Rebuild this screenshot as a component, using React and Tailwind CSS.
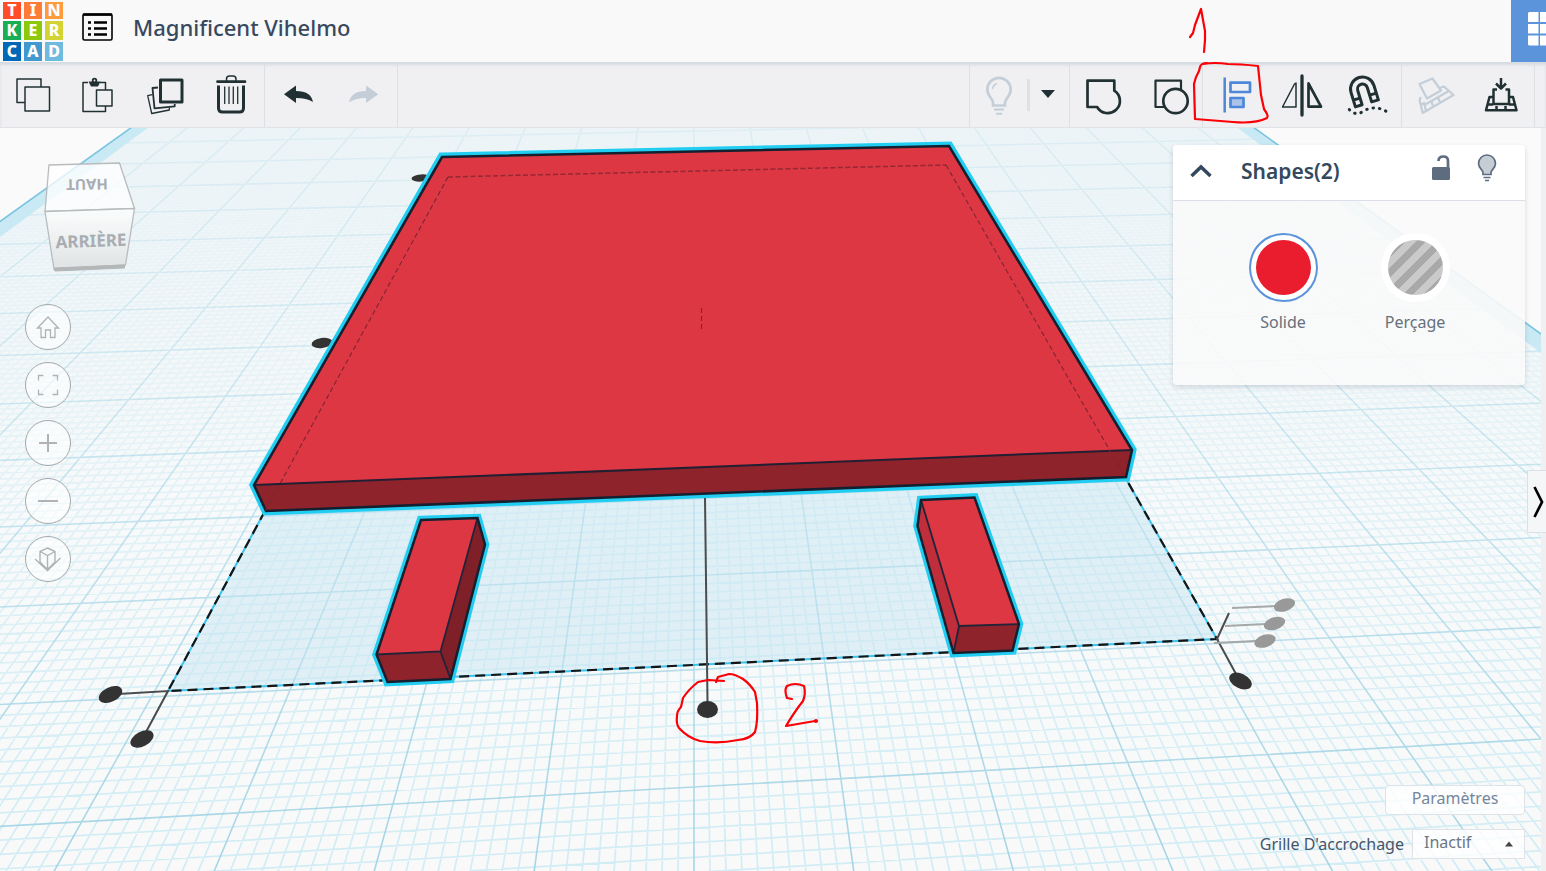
import React, { useState } from 'react';

const logoTiles = [
  { letter: 'T', color: 'bg-[#ff4d2a]' },
  { letter: 'I', color: 'bg-[#ff7b38]' },
  { letter: 'N', color: 'bg-[#ff9c3a]' },
  { letter: 'K', color: 'bg-[#18ae55]' },
  { letter: 'E', color: 'bg-[#8dc90a]' },
  { letter: 'R', color: 'bg-[#d4d334]' },
  { letter: 'C', color: 'bg-[#0068b6]' },
  { letter: 'A', color: 'bg-[#4299ce]' },
  { letter: 'D', color: 'bg-[#6fbbdf]' },
];

// Workplane cell (i, j) -> scene point
const project = (i, j) => {
  const w = 0.00816 * i + 0.1242 * j + 1;
  const x = (153.74 * i + 86.2 * j + 694) / w;
  const y = (-1.97 * i - 34.15 * j + 787) / w;
  return `${x.toFixed(2)} ${y.toFixed(2)}`;
};

const NEAR = -2;
const FAR = 18;

const gridPath = (step, skipMajor) => {
  let d = '';
  for (let n = 0; n <= 20 / step; n++) {
    if (skipMajor && n % 10 === 0) continue;
    const i = -10 + n * step;
    const j = NEAR + n * step;
    d += `M${project(i, NEAR)}L${project(i, FAR)}`;
    d += `M${project(-10, j)}L${project(10, j)}`;
  }
  return d;
};

const quad = (i1, i2) =>
  `M${project(i1, NEAR)}L${project(i2, NEAR)}L${project(i2, FAR)}L${project(i1, FAR)}Z`;

const minorGrid = gridPath(0.1, true);
const majorGrid = gridPath(1, false);

const Scene = () => (
  <svg
    className="absolute inset-0 w-full h-full"
    viewBox="0 128 1541 743"
    preserveAspectRatio="xMidYMid slice"
    aria-hidden="true"
  >
    <defs>
      <linearGradient id="plane" gradientUnits="userSpaceOnUse" x1="0" y1="128" x2="0" y2="871">
        <stop offset="0" stopColor="#eff5f7" />
        <stop offset="0.5" stopColor="#f7f9fa" />
        <stop offset="1" stopColor="#f9f9f9" />
      </linearGradient>
      <linearGradient id="minor" gradientUnits="userSpaceOnUse" x1="0" y1="128" x2="0" y2="871">
        <stop offset="0" stopColor="#c4e4ef" stopOpacity="0.08" />
        <stop offset="0.35" stopColor="#c4e6f1" stopOpacity="0.28" />
        <stop offset="0.7" stopColor="#c2e8f3" stopOpacity="0.55" />
        <stop offset="1" stopColor="#c0e7f3" stopOpacity="0.7" />
      </linearGradient>
      <linearGradient id="major" gradientUnits="userSpaceOnUse" x1="0" y1="128" x2="0" y2="871">
        <stop offset="0" stopColor="#b4dcea" stopOpacity="0.3" />
        <stop offset="0.5" stopColor="#a8d8e8" stopOpacity="0.65" />
        <stop offset="1" stopColor="#9dd1e3" stopOpacity="0.9" />
      </linearGradient>
    </defs>

    {/* workplane */}
    <path d={quad(-10, 10)} fill="url(#plane)" />
    <path d={minorGrid} fill="none" stroke="url(#minor)" strokeWidth="1.7" />
    <path d={majorGrid} fill="none" stroke="url(#major)" strokeWidth="1.6" />
    <path d={quad(-10, -9.7)} fill="#c9eaf4" />
    <path d={quad(9.7, 10)} fill="#c9eaf4" />
    <path
      d={`M${project(-10, NEAR)}L${project(-10, FAR)}M${project(10, NEAR)}L${project(10, FAR)}`}
      stroke="#7cc4e0"
      strokeWidth="1.6"
    />

    {/* selection footprint */}
    <path d="M168 691L265 511L1125 477L1217 639Z" fill="#bfe2f0" fillOpacity="0.42" />
    <path d="M265 511L168 691L1217 639L1125 477" fill="none" stroke="#3cc4ee" strokeWidth="2" />
    <path
      d="M265 511L168 691L1217 639L1125 477"
      fill="none"
      stroke="#151515"
      strokeWidth="2.2"
      strokeDasharray="10 6"
    />

    {/* back handles */}
    <ellipse cx="421" cy="178" rx="9.5" ry="3.6" transform="rotate(-5 421 178)" fill="#333" />
    <ellipse cx="322" cy="343" rx="10.5" ry="5" transform="rotate(-8 322 343)" fill="#333" />

    {/* plate */}
    <path
      d="M442 157L949 146L1132 450L1126 477L266 511L254 485Z"
      fill="none"
      stroke="#22cdf2"
      strokeWidth="9"
    />
    <path d="M442 157L949 146L1132 450L254 485Z" fill="#dd3743" />
    <path d="M254 485L1132 450L1126 477L266 511Z" fill="#8e232c" />
    <path d="M254 485L1132 450" stroke="#221f33" strokeWidth="2" />
    <path
      d="M442 157L949 146L1132 450L1126 477L266 511L254 485Z"
      fill="none"
      stroke="#14202f"
      strokeWidth="2.6"
    />
    <path d="M448 177L946 165" stroke="#942835" strokeWidth="1.5" strokeDasharray="5 2.5" />
    <path
      d="M448 177L265 511M946 165L1125 477M701.5 308V331"
      fill="none"
      stroke="#7d2531"
      strokeWidth="1.1"
      strokeDasharray="5 3"
    />

    {/* left leg */}
    <path
      d="M421 520L477.5 518L485 544.5L450.5 679L387.5 682L376.5 654.5Z"
      fill="none"
      stroke="#22cdf2"
      strokeWidth="8.5"
    />
    <path d="M421 520L477.5 518L440.5 651.5L376.5 654.5Z" fill="#dd3743" />
    <path d="M477.5 518L485 544.5L450.5 679L440.5 651.5Z" fill="#7f1f28" />
    <path d="M376.5 654.5L440.5 651.5L450.5 679L387.5 682Z" fill="#8e232c" />
    <path
      d="M376.5 654.5L440.5 651.5L477.5 518M440.5 651.5L450.5 679"
      fill="none"
      stroke="#222338"
      strokeWidth="1.8"
    />
    <path
      d="M421 520L477.5 518L485 544.5L450.5 679L387.5 682L376.5 654.5Z"
      fill="none"
      stroke="#14202f"
      strokeWidth="2.5"
    />

    {/* right leg */}
    <path
      d="M921 500L974.5 497.5L1019 624L1012.5 650.5L953.5 653L917.5 526Z"
      fill="none"
      stroke="#22cdf2"
      strokeWidth="8.5"
    />
    <path d="M921 500L974.5 497.5L1019 624L959 626Z" fill="#dd3743" />
    <path d="M921 500L917.5 526L953.5 653L959 626Z" fill="#bf2e3a" />
    <path d="M959 626L1019 624L1012.5 650.5L953.5 653Z" fill="#8e232c" />
    <path
      d="M921 500L959 626L1019 624M959 626L953.5 653"
      fill="none"
      stroke="#222338"
      strokeWidth="1.8"
    />
    <path
      d="M921 500L974.5 497.5L1019 624L1012.5 650.5L953.5 653L917.5 526Z"
      fill="none"
      stroke="#14202f"
      strokeWidth="2.5"
    />

    {/* align handles */}
    <g stroke="#4a4c4d" strokeWidth="2">
      <path d="M118 694L168 691L146 732M705 498L707.5 702M1236 674L1217 639L1229 613" fill="none" />
      <path d="M1232 608L1276 606M1225 626L1266 624M1214 643L1256 641" stroke="#a5a8a9" />
    </g>
    <g fill="#333">
      <ellipse cx="110.5" cy="694.5" rx="12.5" ry="7.3" transform="rotate(-25 110.5 694.5)" />
      <ellipse cx="142" cy="739" rx="12.5" ry="7.3" transform="rotate(-28 142 739)" />
      <ellipse cx="707.5" cy="709.5" rx="10.5" ry="8.5" />
      <ellipse cx="1240.5" cy="681" rx="12" ry="7.3" transform="rotate(26 1240.5 681)" />
    </g>
    <g fill="#999">
      <ellipse cx="1284.5" cy="605" rx="11" ry="6.2" transform="rotate(-18 1284.5 605)" />
      <ellipse cx="1274.5" cy="623.5" rx="11" ry="6.2" transform="rotate(-18 1274.5 623.5)" />
      <ellipse cx="1265" cy="641" rx="11" ry="6.2" transform="rotate(-18 1265 641)" />
    </g>

    {/* pen marks */}
    <g fill="none" stroke="#fb0007" strokeWidth="2.2" strokeLinecap="round" strokeLinejoin="round">
      <path d="M724 681L708 680L698 682Q688 690 683 698L681 707Q677 711 677 716Q676 724 679 728Q688 738 700 741Q718 744 738 740Q750 739 755 732Q758 722 757 703L755 692Q750 684 743 679Q735 674 729 674L718 677L716 682" />
      <path d="M792 699L787 698Q784 690 787 686Q795 682 804 686Q806 694 803 701Q795 711 786 726L815 721" />
      <circle cx="816" cy="721" r="1" />
    </g>
  </svg>
);

const ToolButton = ({ label, disabled, children }) => (
  <button type="button" aria-label={label} disabled={disabled} className="block w-[66px] h-[65px]">
    <svg
      className={disabled ? 'w-full h-full text-[#c3ced9]' : 'w-full h-full text-[#213033]'}
      viewBox="0 0 66 65"
      fill="none"
      stroke="currentColor"
      strokeWidth="2.7"
      strokeLinejoin="round"
    >
      {children}
    </svg>
  </button>
);

const Group = ({ children }) => <div className="flex border-r border-[#dce0e5]">{children}</div>;

const Toolbar = () => (
  <div
    role="toolbar"
    className="relative z-10 flex justify-between bg-[#f0f0f2] border-b border-[#dfe2e6] shadow-[inset_0_3px_3px_#d6dbe0]"
  >
    <div className="flex">
      <Group>
        <ToolButton label="Copier">
          <path d="M25 40.5H17V17H41V25M25 25H49.5V49H25Z" strokeWidth="1.5" />
        </ToolButton>
        <ToolButton label="Coller">
          <path d="M22 20.5H17V49.5H39.5V44M39.5 28V20.5H34" strokeWidth="1.5" />
          <path d="M22.5 19.5H34.5L32 24.5H25Z" fill="currentColor" stroke="none" />
          <circle cx="28.5" cy="18.5" r="1.8" strokeWidth="1.8" fill="#f0f0f2" />
          <path d="M30.5 28H46V44H30.5Z" strokeWidth="1.5" />
        </ToolButton>
        <ToolButton label="Dupliquer">
          <path d="M28.5 18H50V40H28.5Z" strokeWidth="3" />
          <path d="M26 25.5L20.5 26L22.5 46.3L42.7 44.3V42" strokeWidth="1.8" />
          <path d="M20.3 32.7L15.7 33.7L19.7 51.5L37.3 48V46" strokeWidth="1.3" />
        </ToolButton>
        <ToolButton label="Supprimer">
          <path d="M19.5 19.7H47" strokeLinecap="round" />
          <path d="M28.5 19V17Q28.5 14 31.5 14H35Q38 14 38 17V19" strokeWidth="1.5" />
          <path d="M20.5 23.5V46Q20.5 50 24.5 50H41.5Q45.5 50 45.5 46V23.5" strokeWidth="3" />
          <path d="M26.7 24.5V42M31 24.5V42M35.3 24.5V42M39.7 24.5V42" strokeWidth="1.3" />
        </ToolButton>
      </Group>
      <Group>
        <ToolButton label="Annuler">
          <path
            d="M19 32.3L31 23.5V29Q46 29 48 40Q42 36 31 36V41Z"
            fill="currentColor"
            stroke="none"
          />
        </ToolButton>
        <ToolButton label="Rétablir" disabled>
          <path
            d="M47.3 32.3L35 23.5V29Q20 29 18 40.5Q24 36 35 36V41Z"
            fill="currentColor"
            stroke="none"
          />
        </ToolButton>
      </Group>
    </div>

    <div className="flex pr-[11px]">
      <div className="flex items-center border-x border-[#dce0e5]">
        <button type="button" aria-label="Tout afficher" disabled className="w-[57px] h-[65px]">
          <svg className="w-full h-full text-[#c3ced9]" viewBox="0 0 57 65" fill="none" stroke="currentColor" strokeWidth="2.7">
            <path d="M23 43.5V40.5C23 37 17.3 34 17.3 27.5A11.7 11.7 0 0 1 40.7 27.5C40.7 34 35 37 35 40.5V43.5Z" />
            <path d="M22.5 27Q23 23 27 21.5" strokeWidth="1.5" />
            <path d="M24 47.5H34M26 51.7H32" strokeWidth="2" />
          </svg>
        </button>
        <span className="w-[3px] h-8 bg-[#dde1e6]" />
        <button type="button" aria-label="Options de visibilité" className="w-[39px] h-[65px]">
          <svg className="w-full h-full" viewBox="0 0 39 65">
            <path d="M11 28H25L18 36Z" fill="#213033" />
          </svg>
        </button>
      </div>
      <Group>
        <ToolButton label="Regrouper">
          <path d="M17.5 18.7H44.3V28.7A12.2 12.2 0 1 1 27.1 45H17.5Z" />
        </ToolButton>
        <ToolButton label="Dissocier">
          <path d="M19.5 18.7H45V45H19.5Z" strokeWidth="2.2" />
          <circle cx="39.5" cy="39" r="12.2" fill="#f0f0f2" />
        </ToolButton>
      </Group>
      <Group>
        <div className="relative">
          <ToolButton label="Aligner">
            <g stroke="#4c87d9">
              <path d="M21.7 15.5V50.5" strokeWidth="2.5" />
              <path d="M27.5 20.7H47V30H27.5Z" />
              <path d="M27.5 36H40.5V45H27.5Z" fill="#abc2ea" />
            </g>
          </ToolButton>
          <svg
            className="absolute -left-4 -top-15 w-22 h-31 pointer-events-none"
            viewBox="1187 2 88 124"
            fill="none"
            stroke="#fb0007"
            strokeWidth="2.2"
            strokeLinecap="round"
            strokeLinejoin="round"
            aria-hidden="true"
          >
            <path d="M1190 37L1193 33L1195 25L1201 9L1203 20L1205 31V40L1204 52" />
            <path d="M1207 63Q1201 63 1200 67L1199 71Q1195 78 1194 84L1195 119L1233 122Q1255 124 1267 118Q1269 116 1264 109L1261 95L1258 66Q1240 64 1228 64Q1215 62 1203 64" />
          </svg>
        </div>
        <ToolButton label="Miroir">
          <path d="M33 14V53" strokeWidth="3.3" strokeLinecap="round" />
          <path d="M13.5 45H27V21L25.5 22Z" strokeWidth="1.5" />
          <path d="M39.5 21.5V44.7H52Z" />
        </ToolButton>
        <ToolButton label="Accrocher">
          <g transform="translate(27.5 27) rotate(-17)">
            <path d="M-12 15V0A12 12 0 0 1 12 0V15H5V0A5 5 0 0 0 -5 0V15ZM-12 8H-5M5 8H12" strokeWidth="3" />
          </g>
          <path
            d="M14.3 47.5Q20 54 27 50Q39 42 51.5 49.5"
            strokeWidth="3"
            strokeDasharray="0.5 6"
            strokeLinecap="round"
          />
        </ToolButton>
      </Group>
      <Group>
        <ToolButton label="Plan de construction" disabled>
          <path d="M17.5 22L30.5 16.5L39 28.5L25 36.5ZM19 35L17.5 38L20.7 51L51.5 33L42 24.5L38.5 25.5M18.5 43L23 40.5M24 49L22.5 43L46 29.5M31 44.5L29.5 39.5M38 40.5L36 35.5" strokeWidth="2.2" />
        </ToolButton>
        <ToolButton label="Déposer">
          <path d="M33 16V26M28 21.5L33 26.5L38 21.5" strokeWidth="2.5" />
          <path d="M29 27.5H25.5V42H41V27.5H37.5M25 35H21.5L18 48.3H48.5L45 35H41M20 42.5H25M41 42.5H46.5M28.5 44V48M37.5 44V48" strokeWidth="2.5" />
        </ToolButton>
      </Group>
    </div>
  </div>
);

const Header = () => (
  <header className="flex items-center justify-between h-[62px] bg-[#f9f9f9] overflow-hidden">
    <div className="flex items-center">
      <a
        href="#"
        aria-label="Tinkercad"
        className="self-start ml-[3px] grid grid-cols-[18px_18px_18px] grid-rows-[17px_19px_19px] gap-x-[3px] gap-y-0.5"
      >
        {logoTiles.map((tile) => (
          <span
            key={tile.letter}
            className={`flex items-center justify-center text-base leading-none font-extrabold text-white ${tile.color}`}
          >
            {tile.letter}
          </span>
        ))}
      </a>
      <button type="button" aria-label="Menu" className="ml-[19px] -mt-2">
        <svg className="w-[31px] h-7" viewBox="0 0 31 28" fill="none" stroke="#000">
          <rect x="1" y="1" width="29" height="26" rx="1.5" strokeWidth="1.6" />
          <path d="M1 1.7H30" strokeWidth="2.4" />
          <path d="M6 9.5H9M6 15.5H9M6 21.5H9M12 9.5H25M12 15.5H25M12 21.5H25" strokeWidth="2.6" />
        </svg>
      </button>
      <h1 className="ml-5 -mt-2 text-[22px] leading-7 font-medium text-[#38495f]">Magnificent Vihelmo</h1>
    </div>
    <button type="button" aria-label="Mes conceptions" className="w-[35px] h-full bg-[#5c94db] overflow-hidden">
      <svg className="w-full h-full" viewBox="0 0 35 62" fill="#fff">
        <path d="M18 12H27.5V22H17V13ZM29 12H39V22H29ZM17 24H27.5V33.5H17ZM29 24H39V33.5H29ZM17 35.5H27.5V45.5H18L17 44.5ZM29 35.5H39V45.5H29Z" />
      </svg>
    </button>
  </header>
);

const viewControls = [
  { label: 'Accueil', icon: <path d="M12.5 24L23 13L33.5 24H30V33.5H25.5V26H20.5V33.5H16V24Z" strokeWidth="1.3" /> },
  { label: 'Ajuster la vue', icon: <path d="M13.5 18.5V13.5H18.5M27.5 13.5H32.5V18.5M32.5 27.5V32.5H27.5M18.5 32.5H13.5V27.5" strokeWidth="1.3" /> },
  { label: 'Zoom avant', icon: <path d="M14 23H32M23 14V32" strokeWidth="2" /> },
  { label: 'Zoom arrière', icon: <path d="M13 23H33" strokeWidth="2" /> },
  { label: 'Perspective', icon: <path d="M22.5 12L30 15.5V26L22.5 33.5L15 26V15.5ZM15 15.5L22.5 19.5L30 15.5M22.5 19.5V33M10 23L22.5 34.5L35.5 22" strokeWidth="1.4" /> },
];

const ViewCube = () => (
  <button type="button" aria-label="Cube de vue" className="block w-24 h-30">
    <svg className="w-full h-full" viewBox="42 156 96 120">
      <defs>
        <linearGradient id="cubeFront" x1="0" y1="0" x2="0" y2="1">
          <stop offset="0" stopColor="#fdfefe" stopOpacity="0.9" />
          <stop offset="1" stopColor="#dfe2e3" stopOpacity="0.95" />
        </linearGradient>
      </defs>
      <path d="M49 165L119.5 163L134.5 208.5L45 211.5Z" fill="#fff" fillOpacity="0.75" stroke="#b9bcbe" strokeWidth="1.3" />
      <path d="M45 211.5L134.5 208.5L125.5 265L54 269Z" fill="url(#cubeFront)" stroke="#b9bcbe" strokeWidth="1.3" />
      <path d="M54 268L124.5 265V268L55 271Z" fill="#b4b7b8" stroke="#b4b7b8" />
      <text x="87" y="190" textAnchor="middle" transform="rotate(179 87 184.5)" fill="#a8adb2" className="text-[15px] font-bold">
        HAUT
      </text>
      <text x="91" y="247" textAnchor="middle" transform="rotate(-2 91 241)" fill="#a8adb2" className="text-[17px] font-bold">
        ARRIÈRE
      </text>
    </svg>
  </button>
);

const ShapePanel = () => {
  const [mode, setMode] = useState('solid');

  return (
    <section className="w-[352px] h-60 rounded bg-[#f9fafa]/90 shadow-[0_2px_5px_rgba(60,80,110,0.2)] overflow-hidden">
      <div className="flex items-center h-14 px-4 bg-white border-b border-[#dcdde8]">
        <button type="button" aria-label="Réduire" className="mb-1">
          <svg className="w-6 h-6" viewBox="0 0 24 24" fill="none" stroke="#34495e" strokeWidth="3.5">
            <path d="M2.5 17L12 8L21.5 17" />
          </svg>
        </button>
        <h2 className="ml-7 mb-1 flex-1 text-[21px] leading-7 font-semibold text-[#34495e]">Shapes(2)</h2>
        <button type="button" aria-label="Verrouiller" className="mr-[22px] mb-2.5">
          <svg className="w-6 h-7" viewBox="0 0 24 28">
            <rect x="3" y="13" width="18" height="13" rx="1.5" fill="#5d6d7f" />
            <path d="M9.5 7Q9.5 2.5 14.5 2.5Q19 2.5 19 7V14" fill="none" stroke="#5d6d7f" strokeWidth="2.7" />
          </svg>
        </button>
        <button type="button" aria-label="Masquer" className="mr-2.5 mb-2.5">
          <svg className="w-6 h-7" viewBox="0 0 24 28" fill="none" stroke="#5d6d7f" strokeWidth="1.7">
            <path d="M8 20.5V18.5C8 16 3.5 14 3.5 9.5A8.5 8.5 0 0 1 20.5 9.5C20.5 14 16 16 16 18.5V20.5Z" fill="#c6cdd5" />
            <path d="M8.5 23.5H15.5M10 26.5H14" />
          </svg>
        </button>
      </div>
      <div className="flex justify-center gap-12 pt-8 text-base leading-6 text-[#66717c]">
        <label className="flex flex-col items-center w-[84px] cursor-pointer">
          <input type="radio" name="mode" className="sr-only" checked={mode === 'solid'} onChange={() => setMode('solid')} />
          <span className={`flex items-center justify-center w-[69px] h-[69px] rounded-full bg-white border-2 ${mode === 'solid' ? 'border-[#5c94db]' : 'border-white'}`}>
            <span className="w-[55px] h-[55px] rounded-full bg-[#e91d2d]" />
          </span>
          <span className="mt-2">Solide</span>
        </label>
        <label className="flex flex-col items-center w-[84px] cursor-pointer">
          <input type="radio" name="mode" className="sr-only" checked={mode === 'hole'} onChange={() => setMode('hole')} />
          <span className={`flex items-center justify-center w-[69px] h-[69px] rounded-full bg-white border-2 ${mode === 'hole' ? 'border-[#5c94db]' : 'border-white'}`}>
            <span className="w-[55px] h-[55px] rounded-full bg-[repeating-linear-gradient(135deg,#cacaca_0_7px,#a9a9a9_7px_14px)]" />
          </span>
          <span className="mt-2">Perçage</span>
        </label>
      </div>
    </section>
  );
};

const SnapSettings = () => (
  <div className="flex flex-col items-end gap-[14px] text-base leading-6">
    <button type="button" className="w-[140px] h-[30px] rounded border border-[#dfe3e8] bg-white/80 pb-1 leading-6 text-[#76869a]">
      Paramètres
    </button>
    <div className="flex items-center">
      <label htmlFor="snap" className="mr-2 text-[#44566b]">
        Grille D'accrochage
      </label>
      <div className="relative">
        <select id="snap" className="block w-[113px] h-[30px] pl-[11px] pb-1 appearance-none border border-[#dfe3e8] bg-white/80 text-[#6b7785]">
          <option>Inactif</option>
        </select>
        <svg className="absolute right-3 top-3 w-2 h-1.5 pointer-events-none" viewBox="0 0 8 6" aria-hidden="true">
          <path d="M0 5.5L4 0.5L8 5.5Z" fill="#444" />
        </svg>
      </div>
    </div>
  </div>
);

const App = () => {
  return (
    <div className="flex flex-col min-h-screen bg-[#fafafa] font-['Noto_Sans',sans-serif]">
      <Header />
      <Toolbar />
      <main className="flex flex-1 bg-[#f0f0f2]">
        <div className="relative flex-1 flex justify-between overflow-hidden bg-[#fafafa]">
          <Scene />
          <div className="relative pt-7">
            <div className="ml-[42px]">
              <ViewCube />
            </div>
            <div className="ml-[25px] mt-7 flex flex-col gap-3">
              {viewControls.map((item) => (
                <button
                  key={item.label}
                  type="button"
                  aria-label={item.label}
                  className="w-[46px] h-[46px] rounded-full border border-[#a3a9ab] bg-white/60"
                >
                  <svg className="w-full h-full" viewBox="1 1 44 44" fill="none" stroke="#afb3b4">
                    {item.icon}
                  </svg>
                </button>
              ))}
            </div>
          </div>
          <div className="relative flex flex-col items-end justify-between pt-[17px] pr-4 pb-3">
            <ShapePanel />
            <SnapSettings />
          </div>
        </div>
        <div className="relative w-[5px]">
          <button
            type="button"
            aria-label="Masquer le panneau"
            className="absolute right-0 top-[342px] w-[19px] h-[63px] border border-r-0 border-[#dbe0e6] bg-[#f5f6f8]"
          >
            <svg className="w-full h-full" viewBox="0 0 18 61" fill="none" stroke="#000" strokeWidth="2.7">
              <path d="M6.5 16L14 31L6.5 46" />
            </svg>
          </button>
        </div>
      </main>
    </div>
  );
};

export default App;
